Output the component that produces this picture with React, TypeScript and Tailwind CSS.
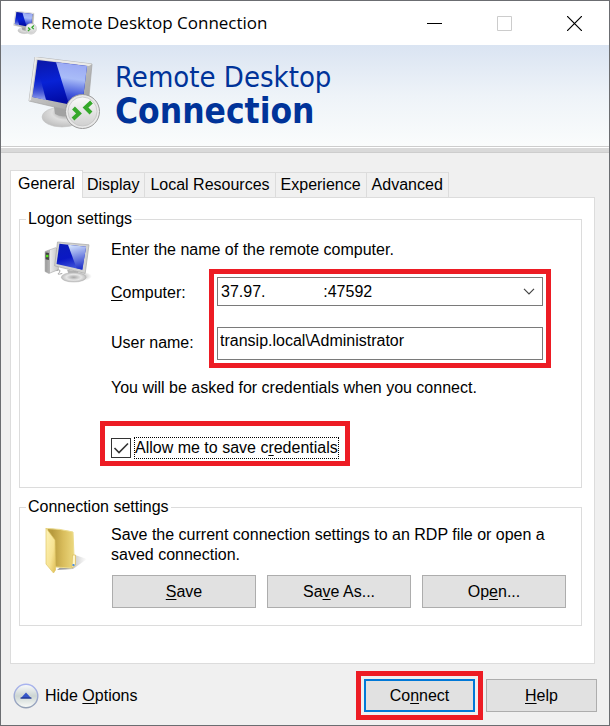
import { useState } from "react";
import type { ReactNode } from "react";

const NB = "\u00a0";
const COMPUTER = "37.97." + NB.repeat(13) + ":47592";

function RemoteIcon({ id, className }: { id: string; className: string }) {
  return (
    <svg viewBox="0 0 72 74" className={className} aria-hidden="true">
      <defs>
        <linearGradient id={id + "-frame"} x1="0" y1="0" x2="1" y2="1">
          <stop offset="0" stopColor="#d4d4d2" />
          <stop offset="0.5" stopColor="#bdbdbd" />
          <stop offset="1" stopColor="#999" />
        </linearGradient>
        <linearGradient id={id + "-screen"} x1="0" y1="0" x2="0.2" y2="1">
          <stop offset="0" stopColor="#0a16a4" />
          <stop offset="0.5" stopColor="#0822d6" />
          <stop offset="1" stopColor="#0008a0" />
        </linearGradient>
        <linearGradient id={id + "-shine"} x1="0.4" y1="0" x2="0.3" y2="1">
          <stop offset="0" stopColor="#9aa9f4" />
          <stop offset="0.35" stopColor="#a9bcf8" />
          <stop offset="0.7" stopColor="#4358dc" />
          <stop offset="1" stopColor="#0a12a8" />
        </linearGradient>
        <linearGradient id={id + "-glow"} x1="0" y1="0" x2="0" y2="1">
          <stop offset="0.3" stopColor="#1226c4" stopOpacity="0" />
          <stop offset="1" stopColor="#9aa9f4" />
        </linearGradient>
        <radialGradient id={id + "-base"} cx="0.6" cy="0.3" r="0.7">
          <stop offset="0" stopColor="#8f8f8f" />
          <stop offset="0.5" stopColor="#dedede" />
          <stop offset="1" stopColor="#c0c0c0" />
        </radialGradient>
        <linearGradient id={id + "-badge"} x1="0" y1="0" x2="0" y2="1">
          <stop offset="0" stopColor="#fafafa" />
          <stop offset="1" stopColor="#d0d0d0" />
        </linearGradient>
      </defs>
      <ellipse cx="34" cy="60" rx="20" ry="10" fill={"url(#" + id + "-base)"} stroke="#c4c4c4" strokeWidth="0.6" />
      <path d="M26 50 L44 52 L42 58 Q34 61 27 57 Z" fill="#a2a2a2" />
      <path d="M7 0 L64 7 L60 50 L52 56 L1 44 Z" fill={"url(#" + id + "-frame)"} stroke="#a4a4a4" strokeWidth="0.7" />
      <path d="M7 0 L64 7 L61 9 L8.500 2 L3 43 L1 44 Z" fill="#ebebe9" />
      <path d="M9.500 3 L59 9 L54 50 L4.500 40 Z" fill={"url(#" + id + "-screen)"} />
      <path d="M9.500 10 L4.500 40 L18 43 Z" fill={"url(#" + id + "-glow)"} />
      <path d="M28 5.300 L59 9 L54 50 L41 47.500 Z" fill={"url(#" + id + "-shine)"} />
      <circle cx="54.500" cy="54.500" r="17" fill="#e9e9e9" stroke="#9b9b9b" strokeWidth="1" />
      <circle cx="54.500" cy="54.500" r="14.500" fill={"url(#" + id + "-badge)"} stroke="#c4c4c4" strokeWidth="0.8" />
      <path d="M45.500 51 L51 56.500 L45 62" fill="none" stroke="#35a82a" strokeWidth="4" />
      <path d="M63.500 45 L57.500 50.500 L63 56" fill="none" stroke="#35a82a" strokeWidth="4" />
    </svg>
  );
}

function ComputerIcon() {
  return (
    <svg viewBox="0 0 50 44" className="mt-0.5 h-[42px] w-12" aria-hidden="true">
      <defs>
        <linearGradient id="pc-screen" x1="0" y1="0" x2="0.3" y2="1">
          <stop offset="0" stopColor="#0b1eb8" />
          <stop offset="0.6" stopColor="#0a18c4" />
          <stop offset="1" stopColor="#3c50d8" />
        </linearGradient>
        <linearGradient id="pc-shine" x1="0.4" y1="0" x2="0.6" y2="1">
          <stop offset="0" stopColor="#cfdffb" />
          <stop offset="1" stopColor="#1a2cc8" />
        </linearGradient>
        <linearGradient id="pc-tower" x1="0" y1="0" x2="1" y2="0">
          <stop offset="0" stopColor="#9a9a9a" />
          <stop offset="0.35" stopColor="#b5b5b5" />
          <stop offset="0.4" stopColor="#e9e9e9" />
          <stop offset="1" stopColor="#c4c4c4" />
        </linearGradient>
        <radialGradient id="pc-base">
          <stop offset="0" stopColor="#a8a8a8" />
          <stop offset="0.6" stopColor="#e6e6e6" />
          <stop offset="1" stopColor="#bdbdbd" />
        </radialGradient>
        <radialGradient id="pc-shadow">
          <stop offset="0" stopColor="#777" stopOpacity="0.6" />
          <stop offset="1" stopColor="#777" stopOpacity="0" />
        </radialGradient>
      </defs>
      <ellipse cx="38" cy="37" rx="12" ry="5" fill="url(#pc-shadow)" />
      <path d="M1 11 L12 7 L15 9 L15 30 L5 34 L1 32 Z" fill="url(#pc-tower)" stroke="#a3a3a3" strokeWidth="0.6" />
      <path d="M1.500 12 L5 12.500 L5 20 L1.500 19 Z" fill="#424242" />
      <rect x="2" y="14.500" width="2.500" height="2.500" fill="#55e51c" />
      <path d="M13 31 Q18 29 16 33 Q12 36 19 34" fill="none" stroke="#a0a0a0" strokeWidth="1" />
      <path d="M24 30 L36 32 L34 38 L27 38 Z" fill="#b2b2b2" />
      <ellipse cx="31" cy="38" rx="13" ry="5" fill="url(#pc-base)" stroke="#b0b0b0" strokeWidth="0.5" />
      <path d="M14 1 L47 4 L43 34 L11 26 Z" fill="#d2d2d0" stroke="#a5a5a5" strokeWidth="0.7" />
      <path d="M16 3 L44 6 L40 30 L13 24 Z" fill="url(#pc-screen)" />
      <path d="M25 4 L44 6 L40 30 L34 28.500 Z" fill="url(#pc-shine)" />
    </svg>
  );
}

function FolderIcon() {
  return (
    <svg viewBox="0 0 44 48" className="h-12 w-11" aria-hidden="true">
      <defs>
        <linearGradient id="folder-back" x1="0" y1="0" x2="1" y2="0">
          <stop offset="0.2" stopColor="#b89b3e" />
          <stop offset="0.6" stopColor="#d9bd5c" />
          <stop offset="1" stopColor="#ecd87e" />
        </linearGradient>
        <linearGradient id="folder-front" x1="0" y1="0" x2="1" y2="1">
          <stop offset="0" stopColor="#fdf3b8" />
          <stop offset="0.6" stopColor="#f7e392" />
          <stop offset="1" stopColor="#dfbe55" />
        </linearGradient>
        <linearGradient id="folder-shadow" x1="0" y1="0" x2="1" y2="0">
          <stop offset="0.3" stopColor="#777" stopOpacity="0.7" />
          <stop offset="1" stopColor="#999" stopOpacity="0" />
        </linearGradient>
      </defs>
      <path d="M13 43 L29 42 L43 32 L31 28 Z" fill="url(#folder-shadow)" />
      <path d="M3 1.500 Q15 1.500 29 5 L30 29 L28 41 L11 40 Z" fill="url(#folder-back)" stroke="#ecdc8e" strokeWidth="1" />
      <path d="M2 1 L11 13 L11.500 43 L9.500 46 L2 37 Z" fill="url(#folder-front)" stroke="#e0c565" strokeWidth="0.7" />
      <path d="M28.500 28 L31.500 28 L31.500 38 L28 41 Z" fill="#fff6c8" stroke="#dcc063" strokeWidth="0.8" />
      <rect x="28.500" y="37" width="2" height="2" fill="#4c8fe0" />
    </svg>
  );
}

function CollapseIcon() {
  return (
    <svg viewBox="0 0 26 26" className="size-[26px]" aria-hidden="true">
      <defs>
        <linearGradient id="collapse-fill" x1="0" y1="0" x2="0" y2="1">
          <stop offset="0" stopColor="#fbfcfd" />
          <stop offset="0.5" stopColor="#ccd5d3" />
          <stop offset="1" stopColor="#fbfdfa" />
        </linearGradient>
        <linearGradient id="collapse-ring" x1="0" y1="0" x2="0" y2="1">
          <stop offset="0" stopColor="#a9b4f0" />
          <stop offset="1" stopColor="#93a0b4" />
        </linearGradient>
      </defs>
      <circle cx="13" cy="13" r="11.800" fill="url(#collapse-fill)" stroke="url(#collapse-ring)" strokeWidth="1.400" />
      <path d="M13 9.500 L18.500 15.500 L7.500 15.500 Z" fill="#3556c8" />
      <path d="M7.500 15 H18.500" stroke="#1c2f80" strokeWidth="1" />
    </svg>
  );
}

function Key({ children }: { children: ReactNode }) {
  return <span className="underline decoration-1 underline-offset-2">{children}</span>;
}

function PushButton({ children, className = "border border-[#adadad]" }: { children: ReactNode; className?: string }) {
  return (
    <button type="button" className={"h-[33px] bg-[#e1e1e1] text-center hover:bg-[#e5f1fb] " + className}>
      {children}
    </button>
  );
}

function Group({ title, icon, children }: { title: string; icon: ReactNode; children: ReactNode }) {
  return (
    <fieldset className="min-w-0 border border-[#dcdcdc]">
      <legend className="ml-1.5 px-0.5">{title}</legend>
      <div className="flex">
        <div className="w-[91px] shrink-0 pt-2.5 pl-6">{icon}</div>
        <div className="min-w-0 flex-1">{children}</div>
      </div>
    </fieldset>
  );
}

const TABS = ["General", "Display", "Local Resources", "Experience", "Advanced"];

export default function App() {
  const [active, setActive] = useState("General");
  const [allow, setAllow] = useState(true);
  const [user, setUser] = useState("transip.local\\Administrator");

  return (
    <div className="flex min-h-screen flex-col border border-[#6b6d71] bg-[#f0f0f0] font-['Liberation_Sans',Arial,sans-serif] text-[16px] leading-5 text-black">
      <div className="flex h-11 items-center bg-white pl-3">
        <RemoteIcon id="small" className="h-6 w-6" />
        <span className="ml-1 flex-1 font-['Open_Sans','Segoe_UI',sans-serif] text-[17px] leading-6">Remote Desktop Connection</span>
        <button type="button" aria-label="Minimize" className="flex h-full w-[70px] items-center justify-center">
          <svg viewBox="0 0 15 15" className="size-[15px]" shapeRendering="crispEdges"><path d="M0 7h15v1H0z" /></svg>
        </button>
        <button type="button" aria-label="Maximize" disabled className="flex h-full w-[70px] items-center justify-center">
          <svg viewBox="0 0 15 15" className="size-[15px]"><path d="M.5.5h14v14H.5z" fill="none" stroke="#ccc" /></svg>
        </button>
        <button type="button" aria-label="Close" className="flex h-full w-[70px] items-center justify-center">
          <svg viewBox="0 0 15 15" className="size-[15px]"><path d="M0 0l15 15M15 0L0 15" stroke="#000" strokeWidth="1.200" /></svg>
        </button>
      </div>

      <header className="flex h-[101px] bg-linear-to-b from-[#dae4f2] via-[#eef3f8] to-[#fafcfc] pt-3 pl-[27px] text-[#003399]">
        <RemoteIcon id="large" className="h-[74px] w-[72px]" />
        <h1 className="ml-[15px] pt-0.5 font-['DejaVu_Sans_Condensed','Noto_Sans',Tahoma,sans-serif]">
          <span className="block text-[29px] leading-9">Remote Desktop</span>
          <span className="block text-[35px] leading-8 font-bold">Connection</span>
        </h1>
      </header>
      <div className="h-[7px] border-y border-[#cdcdcd] bg-[#d9d9d9]">
        <div className="h-px bg-white" />
      </div>

      <main className="flex flex-1 flex-col pt-[17px] pr-3.5 pl-[9px]">
        <div role="tablist" className="flex items-end">
          {TABS.map((tab) => (
            <button
              key={tab}
              type="button"
              role="tab"
              aria-selected={active === tab}
              onClick={() => setActive(tab)}
              className={
                active === tab
                  ? "relative z-10 -mr-px -mb-px h-7 border border-b-0 border-[#dcdcdc] bg-white px-[7px] pb-0.5"
                  : "h-[25px] border-t border-r border-[#dcdcdc] bg-[#f0f0f0] px-[5px]"
              }
            >
              {tab}
            </button>
          ))}
        </div>

        <section className="flex flex-1 flex-col gap-[9px] border border-[#dcdcdc] bg-white pt-[11px] pr-3 pb-9 pl-2">
          <Group title="Logon settings" icon={<ComputerIcon />}>
            <div className="pt-[11px] pb-[21px]">
              <p>Enter the name of the remote computer.</p>
              <div className="mt-[17px] flex pr-[38px]">
                <div className="flex w-[106px] shrink-0 flex-col gap-[18px]">
                  <label htmlFor="computer" className="leading-8"><Key>C</Key>omputer:</label>
                  <label htmlFor="user" className="leading-8">User name:</label>
                </div>
                <div className="flex min-w-0 flex-1 flex-col gap-[21px] outline-5 outline-offset-3 outline-[#ed1c24]">
                  <div className="relative">
                    <select id="computer" className="block h-[29px] w-full appearance-none border border-[#7a7a7a] bg-white pl-[3px]">
                      <option>{COMPUTER}</option>
                    </select>
                    <svg viewBox="0 0 12 7" className="pointer-events-none absolute top-[11px] right-2 h-[7px] w-3" aria-hidden="true">
                      <path d="M1 .8l5 5 5-5" fill="none" stroke="#444" strokeWidth="1.200" />
                    </svg>
                  </div>
                  <input
                    id="user"
                    type="text"
                    value={user}
                    onChange={(e) => setUser(e.target.value)}
                    className="h-[33px] w-full border border-[#7a7a7a] bg-white pb-1.5 pl-0.5"
                  />
                </div>
              </div>
              <p className="mt-[18px]">You will be asked for credentials when you connect.</p>
              <div className="mt-[23px] -ml-[11px] flex w-fit border-5 border-[#ed1c24] pt-[11px] pr-1.5 pb-0.5 pl-1.5">
                <label className="flex items-center gap-[3px]">
                  <span className="relative flex">
                    <input
                      type="checkbox"
                      checked={allow}
                      onChange={(e) => setAllow(e.target.checked)}
                      className="size-5 appearance-none border border-[#333] bg-white"
                    />
                    {allow && (
                      <svg viewBox="0 0 20 20" className="pointer-events-none absolute inset-0 size-5" aria-hidden="true">
                        <path d="M3.500 10l4.500 4.500 9-9" fill="none" stroke="#333" strokeWidth="1.600" />
                      </svg>
                    )}
                  </span>
                  <span className="border border-dotted border-black">
                    Allow me to save c<Key>r</Key>edentials
                  </span>
                </label>
              </div>
            </div>
          </Group>

          <Group title="Connection settings" icon={<FolderIcon />}>
            <div className="pt-2 pr-[15px] pb-[17px]">
              <p>Save the current connection settings to an RDP file or open a saved connection.</p>
              <div className="mt-2.5 ml-px grid grid-cols-3 gap-[11px]">
                <PushButton><Key>S</Key>ave</PushButton>
                <PushButton>Sa<Key>v</Key>e As...</PushButton>
                <PushButton>Op<Key>e</Key>n...</PushButton>
              </div>
            </div>
          </Group>
        </section>
      </main>

      <footer className="flex items-center pt-[15px] pr-3 pb-[13px] pl-3">
        <button type="button" className="flex items-center gap-1.5">
          <CollapseIcon />
          <span>Hide <Key>O</Key>ptions</span>
        </button>
        <div className="ml-auto flex gap-[11px]">
          <PushButton className="w-[111px] border-2 border-[#0078d7] outline-5 outline-offset-3 outline-[#ed1c24]">
            Co<Key>n</Key>nect
          </PushButton>
          <PushButton className="w-[111px] border border-[#adadad]"><Key>H</Key>elp</PushButton>
        </div>
      </footer>
    </div>
  );
}
